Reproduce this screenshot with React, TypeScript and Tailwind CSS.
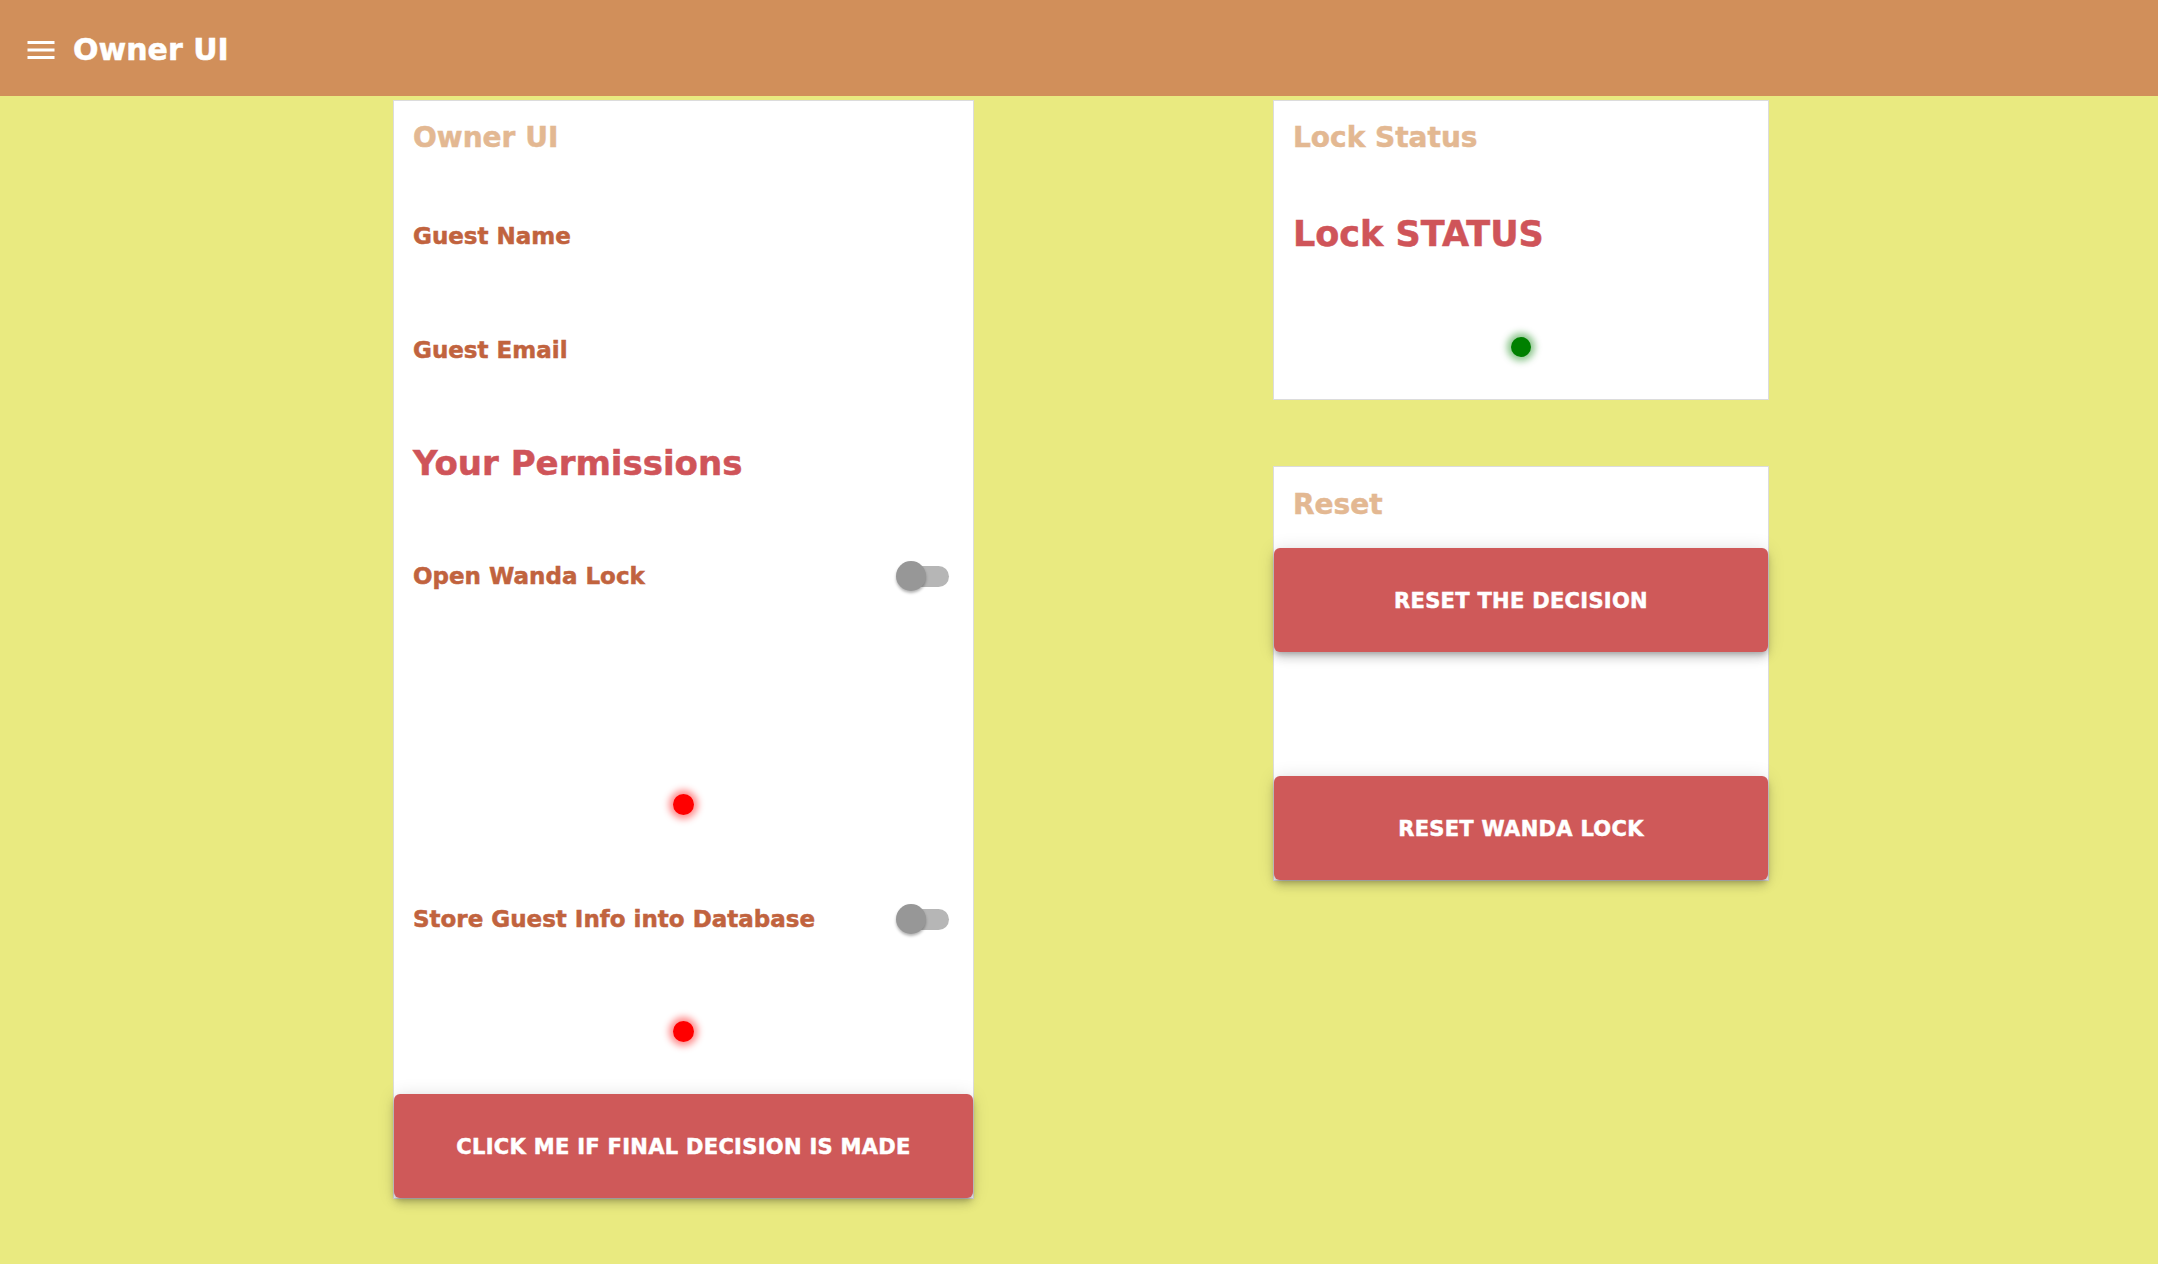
import React from 'react';

const font = { fontFamily: '"DejaVu Sans", "Liberation Sans", sans-serif' };

// grey, "off" switch like the MUI one in the reference
const Toggle: React.FC = () => (
  <div className="relative w-[53px] h-[30px] shrink-0">
    <div className="absolute left-[2px] top-[4.5px] w-[51px] h-[21px] rounded-full bg-[#b6b6b6]" />
    <div className="absolute left-0 top-0 w-[30px] h-[30px] rounded-full bg-[#979797] shadow-[0_2px_3px_rgba(0,0,0,0.3)]" />
  </div>
);

const RedDot: React.FC<{ className?: string }> = ({ className }) => (
  <div className={`self-center w-[21px] h-[21px] rounded-full bg-[#ff0000] shadow-[0_0_7px_4px_rgba(255,0,0,0.45)] ${className ?? ''}`} />
);

const BigButton: React.FC<{ label: string; className?: string }> = ({ label, className }) => (
  <button
    className={`w-full h-[104px] pt-[3px] rounded-[6px] bg-[#cf5959] text-white text-[21px] font-bold uppercase tracking-[0.3px] shadow-[0_3px_5px_-1px_rgba(0,0,0,0.2),0_6px_10px_0_rgba(0,0,0,0.14),0_1px_18px_0_rgba(0,0,0,0.12)] ${className ?? ''}`}
  >
    {label}
  </button>
);

const App: React.FC = () => {
  return (
    <div className="min-h-screen bg-[#e9ea80] [-webkit-text-stroke:0.5px]" style={font}>
      <header className="h-[96px] bg-[#d18f5a] flex items-center">
        <svg viewBox="0 0 24 24" className="w-[36px] h-[36px] ml-[23px] mt-[3px] fill-white">
          <path d="M3 18h18v-2H3v2zm0-5h18v-2H3v2zm0-7v2h18V6H3z" />
        </svg>
        <h1 className="ml-[14px] mt-[3px] text-[30px] leading-[36px] font-bold text-white">Owner UI</h1>
      </header>

      <div className="flex items-start pl-[393px] gap-[299px] pt-[4px]">
        {/* left column: guest + permissions */}
        <div className="w-[581px] bg-white border border-[#dcdcdc] flex flex-col">
          <h2 className="mt-[20px] px-[19px] text-[28px] leading-[34px] font-bold text-[#e3b892]">Owner UI</h2>
          <p className="mt-[67px] px-[19px] text-[23px] leading-[28px] font-bold text-[#c1633e]">Guest Name</p>
          <p className="mt-[86px] px-[19px] text-[23px] leading-[28px] font-bold text-[#c1633e]">Guest Email</p>
          <h3 className="mt-[79px] px-[19px] text-[34px] leading-[40px] font-bold text-[#cf5459]">Your Permissions</h3>

          <div className="mt-[73px] h-[40px] pl-[19px] pr-[24px] flex items-center justify-between">
            <span className="text-[23px] font-bold text-[#c1633e]">Open Wanda Lock</span>
            <Toggle />
          </div>
          <RedDot className="mt-[198px]" />

          <div className="mt-[84px] h-[40px] pl-[19px] pr-[24px] flex items-center justify-between">
            <span className="text-[23px] font-bold text-[#c1633e]">Store Guest Info into Database</span>
            <Toggle />
          </div>
          <RedDot className="mt-[82px]" />

          <BigButton label="Click me if final decision is made" className="mt-[52px]" />
        </div>

        {/* right column: status + reset */}
        <div className="w-[496px] flex flex-col gap-[66px]">
          <div className="bg-white border border-[#dcdcdc] flex flex-col pb-[42px]">
            <h2 className="mt-[20px] px-[19px] text-[28px] leading-[34px] font-bold text-[#e3b892]">Lock Status</h2>
            <h3 className="mt-[59px] px-[19px] text-[35px] leading-[40px] font-bold text-[#cf5459]">Lock STATUS</h3>
            <div className="mt-[83px] self-center w-[20px] h-[20px] rounded-full bg-[#008000] shadow-[0_0_7px_4px_rgba(0,128,0,0.45)]" />
          </div>

          <div className="bg-white border border-[#dcdcdc] flex flex-col">
            <h2 className="mt-[21px] px-[19px] text-[28px] leading-[34px] font-bold text-[#e3b892]">Reset</h2>
            <BigButton label="Reset the decision" className="mt-[26px]" />
            <BigButton label="Reset Wanda Lock" className="mt-[124px]" />
          </div>
        </div>
      </div>
    </div>
  );
};

export default App;
